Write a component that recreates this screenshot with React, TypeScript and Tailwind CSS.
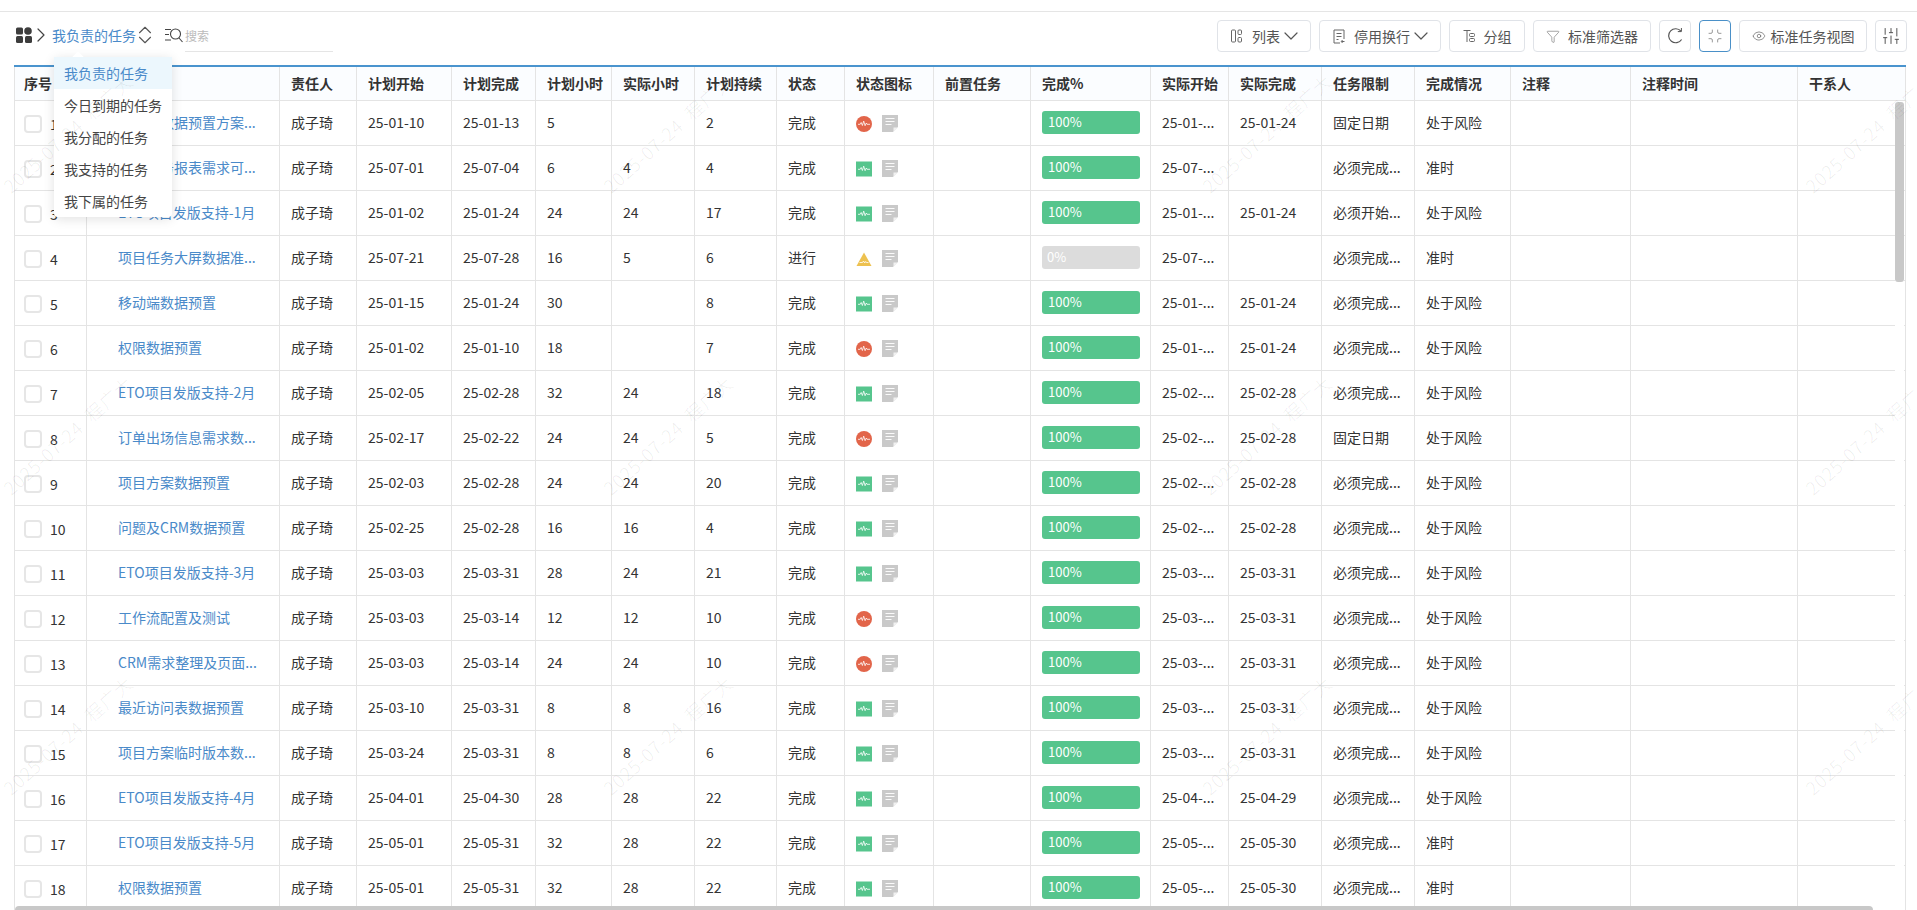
import { ChevronDown, ChevronRight, ChevronUp, Eye, Filter, Minimize, SlidersVertical } from "lucide-react"

type Row = {
  name: string
  start: string
  end: string
  plan: string
  actual: string
  dur: string
  status: string
  icon: "red" | "green" | "yellow"
  pct: number
  doneAt: string
  limit: string
  state: string
}

const MUST = "必须完成..."
const RISK = "处于风险"
const OK = "准时"

const rows: Row[] = [
  { name: "移动端数据预置方案...", start: "25-01-10", end: "25-01-13", plan: "5", actual: "", dur: "2", status: "完成", icon: "red", pct: 100, doneAt: "25-01-24", limit: "固定日期", state: RISK },
  { name: "项目任务报表需求可...", start: "25-07-01", end: "25-07-04", plan: "6", actual: "4", dur: "4", status: "完成", icon: "green", pct: 100, doneAt: "", limit: MUST, state: OK },
  { name: "ETO项目发版支持-1月", start: "25-01-02", end: "25-01-24", plan: "24", actual: "24", dur: "17", status: "完成", icon: "green", pct: 100, doneAt: "25-01-24", limit: "必须开始...", state: RISK },
  { name: "项目任务大屏数据准...", start: "25-07-21", end: "25-07-28", plan: "16", actual: "5", dur: "6", status: "进行", icon: "yellow", pct: 0, doneAt: "", limit: MUST, state: OK },
  { name: "移动端数据预置", start: "25-01-15", end: "25-01-24", plan: "30", actual: "", dur: "8", status: "完成", icon: "green", pct: 100, doneAt: "25-01-24", limit: MUST, state: RISK },
  { name: "权限数据预置", start: "25-01-02", end: "25-01-10", plan: "18", actual: "", dur: "7", status: "完成", icon: "red", pct: 100, doneAt: "25-01-24", limit: MUST, state: RISK },
  { name: "ETO项目发版支持-2月", start: "25-02-05", end: "25-02-28", plan: "32", actual: "24", dur: "18", status: "完成", icon: "green", pct: 100, doneAt: "25-02-28", limit: MUST, state: RISK },
  { name: "订单出场信息需求数...", start: "25-02-17", end: "25-02-22", plan: "24", actual: "24", dur: "5", status: "完成", icon: "red", pct: 100, doneAt: "25-02-28", limit: "固定日期", state: RISK },
  { name: "项目方案数据预置", start: "25-02-03", end: "25-02-28", plan: "24", actual: "24", dur: "20", status: "完成", icon: "green", pct: 100, doneAt: "25-02-28", limit: MUST, state: RISK },
  { name: "问题及CRM数据预置", start: "25-02-25", end: "25-02-28", plan: "16", actual: "16", dur: "4", status: "完成", icon: "green", pct: 100, doneAt: "25-02-28", limit: MUST, state: RISK },
  { name: "ETO项目发版支持-3月", start: "25-03-03", end: "25-03-31", plan: "28", actual: "24", dur: "21", status: "完成", icon: "green", pct: 100, doneAt: "25-03-31", limit: MUST, state: RISK },
  { name: "工作流配置及测试", start: "25-03-03", end: "25-03-14", plan: "12", actual: "12", dur: "10", status: "完成", icon: "red", pct: 100, doneAt: "25-03-31", limit: MUST, state: RISK },
  { name: "CRM需求整理及页面...", start: "25-03-03", end: "25-03-14", plan: "24", actual: "24", dur: "10", status: "完成", icon: "red", pct: 100, doneAt: "25-03-31", limit: MUST, state: RISK },
  { name: "最近访问表数据预置", start: "25-03-10", end: "25-03-31", plan: "8", actual: "8", dur: "16", status: "完成", icon: "green", pct: 100, doneAt: "25-03-31", limit: MUST, state: RISK },
  { name: "项目方案临时版本数...", start: "25-03-24", end: "25-03-31", plan: "8", actual: "8", dur: "6", status: "完成", icon: "green", pct: 100, doneAt: "25-03-31", limit: MUST, state: RISK },
  { name: "ETO项目发版支持-4月", start: "25-04-01", end: "25-04-30", plan: "28", actual: "28", dur: "22", status: "完成", icon: "green", pct: 100, doneAt: "25-04-29", limit: MUST, state: RISK },
  { name: "ETO项目发版支持-5月", start: "25-05-01", end: "25-05-31", plan: "32", actual: "28", dur: "22", status: "完成", icon: "green", pct: 100, doneAt: "25-05-30", limit: MUST, state: OK },
  { name: "权限数据预置", start: "25-05-01", end: "25-05-31", plan: "32", actual: "28", dur: "22", status: "完成", icon: "green", pct: 100, doneAt: "25-05-30", limit: MUST, state: OK },
]

const columns = [
  { title: "序号", width: "w-[72px]" },
  { title: "", width: "w-[193px]" },
  { title: "责任人", width: "w-[77px]" },
  { title: "计划开始", width: "w-[95px]" },
  { title: "计划完成", width: "w-[84px]" },
  { title: "计划小时", width: "w-[76px]" },
  { title: "实际小时", width: "w-[83px]" },
  { title: "计划持续", width: "w-[82px]" },
  { title: "状态", width: "w-[68px]" },
  { title: "状态图标", width: "w-[89px]" },
  { title: "前置任务", width: "w-[97px]" },
  { title: "完成%", width: "w-[120px]" },
  { title: "实际开始", width: "w-[78px]" },
  { title: "实际完成", width: "w-[93px]" },
  { title: "任务限制", width: "w-[93px]" },
  { title: "完成情况", width: "w-[96px]" },
  { title: "注释", width: "w-[120px]" },
  { title: "注释时间", width: "w-[167px]" },
  { title: "干系人", width: "w-[108px]" },
]

const menu = ["我负责的任务", "今日到期的任务", "我分配的任务", "我支持的任务", "我下属的任务"]

const cell = "border-r border-b border-[#e4e4e4] px-[11px] pb-[2px] whitespace-nowrap overflow-hidden"

function Pulse() {
  return (
    <path
      d="M2 8.3h2.2l1-1.8 1.2 3 1.3-4.4 1.4 4.6 1.2-2.7.8 1.3H14"
      fill="none"
      stroke="white"
      strokeWidth="0.8"
      strokeLinejoin="round"
    />
  )
}

function StatusIcon({ type }: { type: Row["icon"] }) {
  if (type === "red") {
    return (
      <svg width="16" height="16" viewBox="0 0 16 16">
        <circle cx="8" cy="8" r="8" fill="#e2654a" />
        <Pulse />
      </svg>
    )
  }
  if (type === "green") {
    return (
      <svg width="16" height="16" viewBox="0 0 16 16">
        <rect x="0" y="0.5" width="16" height="15" fill="#56c58d" />
        <Pulse />
      </svg>
    )
  }
  return (
    <svg width="16" height="16" viewBox="0 0 16 16">
      <path d="M8 1.5 15.5 15H.5z" fill="#edc14f" />
      <path d="M3.5 11.5h3l1-1.5 1.2 2 1-1.5.8 1h2" fill="none" stroke="white" strokeWidth="0.8" />
    </svg>
  )
}

function NoteIcon() {
  return (
    <svg width="16" height="17" viewBox="0 0 16 17">
      <path d="M0 0h16v12l-5 5H0z" fill="#c9c9c9" />
      <path d="M3.5 3.5h9M3.5 6.5h9M3.5 9.5h6" stroke="white" strokeWidth="0.9" />
      <path d="M16 12.5h-4.5V17z" fill="#f1f1f1" />
    </svg>
  )
}

function ToolButton({ width, active, children }: { width: string; active?: boolean; children: React.ReactNode }) {
  return (
    <button
      className={`flex h-8 items-center justify-center rounded border text-sm text-[#555] ${width} ${
        active ? "border-[#4a90c8]" : "border-[#e0e3e8]"
      }`}
    >
      {children}
    </button>
  )
}

function ListIcon() {
  return (
    <svg width="11" height="14" viewBox="0 0 11 14" fill="none" stroke="#666" strokeWidth="1">
      <rect x="0.5" y="1" width="4" height="12" rx="1" />
      <rect x="7" y="1" width="3.5" height="4.5" rx="1" />
      <rect x="7" y="8.5" width="3.5" height="4.5" rx="1" />
    </svg>
  )
}

function WrapIcon() {
  return (
    <svg width="12" height="15" viewBox="0 0 12 15" fill="none" stroke="#666" strokeWidth="1">
      <path d="M11 10V1H1v13h6" />
      <path d="M3.5 4.5h5M3.5 7.5h5M3.5 10.5h2" />
      <path d="M8.5 12.5h3M9.5 11l-1.2 1.5 1.2 1.5" />
    </svg>
  )
}

function GroupIcon() {
  return (
    <svg width="12" height="14" viewBox="0 0 12 14" fill="none" stroke="#666" strokeWidth="1">
      <path d="M0.5 1.5h7M4 1.5V13" />
      <rect x="6.5" y="4.5" width="5" height="3" rx="1" />
      <rect x="6.5" y="9.5" width="5" height="3" rx="1" />
    </svg>
  )
}

function RefreshIcon() {
  return (
    <svg width="15" height="18" viewBox="0 0 15 18" fill="none" stroke="#555" strokeWidth="1.2">
      <path d="M13 4.2A7 7 0 1 0 13.6 12.5" />
      <path d="M13.4 1v3.6H9.8" strokeWidth="1" />
    </svg>
  )
}

export default function App() {
  const marks: { x: number; y: number }[] = []
  for (const y of [195, 497, 797]) {
    for (const x of [12, 612, 1211, 1814]) marks.push({ x, y })
  }

  return (
    <div className="relative h-[910px] w-[1917px] overflow-hidden bg-white font-['Noto_Sans_CJK_SC','Liberation_Sans',sans-serif] text-sm text-[#333]">
      <div className="mt-[11px] border-t border-[#e5e5e5]" />

      {/* toolbar */}
      <div className="flex h-[53px] items-start justify-between pl-4 pr-[10px] pt-2">
        <div className="flex h-8 items-center">
          <svg className="-mt-[2px]" width="16" height="16" viewBox="0 0 16 16" fill="#3d3d3d">
            <rect x="0" y="0.5" width="7" height="7" rx="1.5" />
            <circle cx="12" cy="4" r="3.8" />
            <rect x="0" y="9" width="7" height="7" rx="1.5" />
            <rect x="9" y="9" width="7" height="7" rx="1.5" />
          </svg>
          <ChevronRight className="-ml-[3px] -mt-[2px] h-6 w-6 shrink-0 text-[#444]" strokeWidth={1.2} />
          <span className="-ml-px -mt-[2px] text-[#4a8ac9]">我负责的任务</span>
          <div className="-ml-[2px] -mt-[2px] flex w-[22px] flex-col items-center text-[#555]">
            <ChevronUp className="-mb-3 h-[22px] w-[22px]" strokeWidth={1.2} />
            <ChevronDown className="h-[22px] w-[22px]" strokeWidth={1.2} />
          </div>
          <svg className="ml-[9px] -mt-[2px]" width="18" height="15" viewBox="0 0 18 15" fill="none" stroke="#444" strokeWidth="1.1">
            <path d="M0 1.5h6M0 6.5h4M0 12h6" />
            <circle cx="10.5" cy="6" r="5" />
            <path d="M14 10l3.5 4" />
          </svg>
          <div className="ml-[2px] flex h-8 w-[148px] items-center border-b border-[#e5e5e5] text-xs text-[#bbb]">搜索</div>
        </div>

        <div className="flex gap-2 text-[#555]">
          <ToolButton width="w-[94px]">
            <ListIcon />
            <span className="ml-[10px]">列表</span>
            <ChevronDown className="-ml-px -mr-[6px] h-6 w-6" strokeWidth={1.2} />
          </ToolButton>
          <ToolButton width="w-[122px]">
            <WrapIcon />
            <span className="ml-[9px]">停用换行</span>
            <ChevronDown className="-ml-px -mr-[6px] h-6 w-6" strokeWidth={1.2} />
          </ToolButton>
          <ToolButton width="w-[76px]">
            <GroupIcon />
            <span className="ml-[9px]">分组</span>
          </ToolButton>
          <ToolButton width="w-[118px]">
            <Filter className="h-[15px] w-[14px] text-[#666]" strokeWidth={1} />
            <span className="ml-[8px]">标准筛选器</span>
          </ToolButton>
          <ToolButton width="w-[32px]">
            <RefreshIcon />
          </ToolButton>
          <ToolButton width="w-[32px]" active>
            <Minimize className="h-4 w-4 text-[#666]" strokeWidth={1} />
          </ToolButton>
          <ToolButton width="w-[128px]">
            <Eye className="h-[14px] w-[14px] text-[#666]" strokeWidth={1.2} />
            <span className="ml-[5px]">标准任务视图</span>
          </ToolButton>
          <ToolButton width="w-[32px]">
            <SlidersVertical className="h-5 w-5 text-[#555]" strokeWidth={1.2} />
          </ToolButton>
        </div>
      </div>

      {/* table */}
      <div className="relative ml-[14px] w-[1892px] border-t-2 border-[#4a94ce]">
        <table className="w-[1891px] table-fixed border-separate border-spacing-0 border-l border-[#e4e4e4]">
          <colgroup>
            {columns.map((c, i) => (
              <col key={i} className={c.width} />
            ))}
          </colgroup>
          <thead>
            <tr className="h-[34px] bg-[#fbfdff]">
              {columns.map((c, i) => (
                <th key={i} className={`${cell} ${i === 0 ? "!px-[9px]" : ""} text-left font-bold text-[#333]`}>
                  {c.title}
                </th>
              ))}
            </tr>
          </thead>
          <tbody>
            {rows.map((r, i) => (
              <tr key={i} className="h-[45px]">
                <td className={`${cell} !px-[9px]`}>
                  <div className="flex items-center pt-[3px]">
                    <span className="h-[18px] w-[18px] shrink-0 rounded-[4px] border-2 border-[#e6e6e6]" />
                    <span className="ml-2">{i + 1}</span>
                  </div>
                </td>
                <td className={`${cell} !pl-[31px] text-[#4a8ac9]`}>{r.name}</td>
                <td className={cell}>成子琦</td>
                <td className={cell}>{r.start}</td>
                <td className={cell}>{r.end}</td>
                <td className={cell}>{r.plan}</td>
                <td className={cell}>{r.actual}</td>
                <td className={cell}>{r.dur}</td>
                <td className={cell}>{r.status}</td>
                <td className={cell}>
                  <div className="flex items-center gap-[10px] pt-[3px]">
                    <StatusIcon type={r.icon} />
                    <NoteIcon />
                  </div>
                </td>
                <td className={cell} />
                <td className={cell}>
                  <div
                    className={
                      r.pct === 100
                        ? "flex h-[23px] w-[98px] items-center rounded-[3px] bg-[#56c58d] pl-[6px] text-[13px] text-white"
                        : "flex h-[23px] w-[98px] items-center rounded-[3px] bg-[#dcdcdc] pl-[5px] text-[13px] text-white"
                    }
                  >
                    {r.pct}%
                  </div>
                </td>
                <td className={cell}>{r.start.slice(0, 6)}...</td>
                <td className={cell}>{r.doneAt}</td>
                <td className={cell}>{r.limit}</td>
                <td className={cell}>{r.state}</td>
                <td className={cell} />
                <td className={cell} />
                <td className={cell} />
              </tr>
            ))}
          </tbody>
        </table>

        {/* scrollbars */}
        <div className="absolute right-[2px] top-[34px] bottom-0 w-[9px] bg-white">
          <div className="mt-[1px] h-[180px] w-[9px] rounded-[3px] bg-[#c8c8c8]" />
        </div>
      </div>
      <div className="absolute bottom-0 left-[15px] h-1 w-[1858px] rounded-t-sm bg-[#c8c8c8]" />

      {/* view menu */}
      <div className="absolute left-[54px] top-[57px] w-[118px] rounded-sm bg-white shadow-[0_2px_12px_rgba(0,0,0,0.12)]">
        <div className="absolute left-[20px] top-[-4px] h-2 w-2 rotate-45 bg-white" />
        {menu.map((m, i) => (
          <div
            key={m}
            className={
              i === 0
                ? "relative flex h-8 items-center whitespace-nowrap bg-[#ecf7fd] pl-[10px] text-[#4a8ac9]"
                : "relative flex h-8 items-center whitespace-nowrap pl-[10px] text-[#444]"
            }
          >
            {m}
          </div>
        ))}
      </div>

      {/* watermark */}
      <div className="pointer-events-none absolute inset-0 overflow-hidden">
        {marks.map((m, i) => (
          <span
            key={i}
            className="absolute origin-bottom-left -rotate-[42deg] whitespace-pre text-[18px] font-light leading-none tracking-[1px] text-black/[0.08]"
            style={{ left: m.x, top: m.y - 18 }}
          >
            {"2025-07-24  程广大"}
          </span>
        ))}
      </div>
    </div>
  )
}
